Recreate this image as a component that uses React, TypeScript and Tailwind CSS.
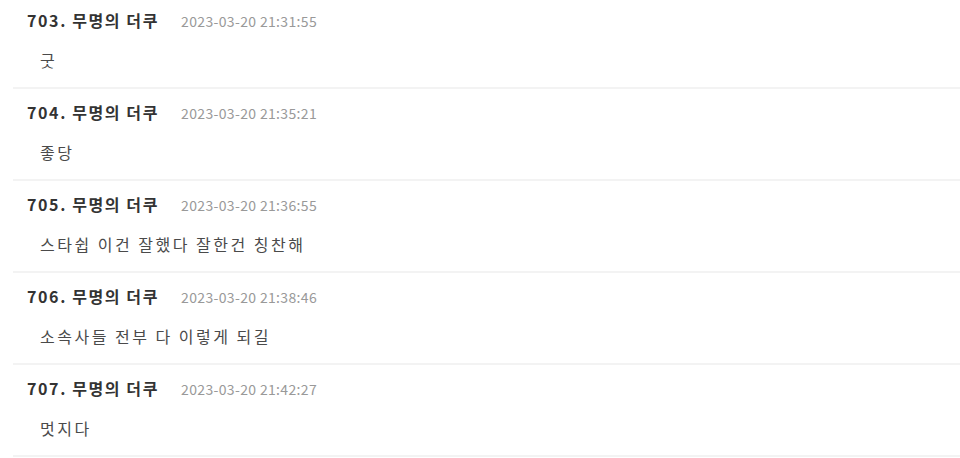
const comments = [
  { no: 703, name: "무명의 더쿠", date: "2023-03-20 21:31:55", body: "굿" },
  { no: 704, name: "무명의 더쿠", date: "2023-03-20 21:35:21", body: "좋당" },
  { no: 705, name: "무명의 더쿠", date: "2023-03-20 21:36:55", body: "스타쉽 이건 잘했다 잘한건 칭찬해" },
  { no: 706, name: "무명의 더쿠", date: "2023-03-20 21:38:46", body: "소속사들 전부 다 이렇게 되길" },
  { no: 707, name: "무명의 더쿠", date: "2023-03-20 21:42:27", body: "멋지다" },
];

export default function App() {
  return (
    <div
      className="w-[960px] h-[458px] overflow-hidden bg-white"
      style={{ fontFamily: '"Noto Sans CJK KR", "Noto Sans", sans-serif' }}
    >
      {/* list is scrolled a few px past its top */}
      <ul className="ml-[13px] -mt-[3px]">
        {comments.map((c) => (
          <li key={c.no} className="h-[92px] border-b-2 border-[#f3f3f3] pl-[14px]">
            <div className="flex items-baseline pt-[10px] h-[27px] leading-[26px]">
              <span className="text-[16px] font-bold tracking-[1.6px] text-[#333]">
                {c.no}. {c.name}
              </span>
              <span className="ml-[22px] text-[14px] tracking-[0.35px] text-[#999]">{c.date}</span>
            </div>
            <p className="mt-[23px] pl-[13px] text-[16px] tracking-[2.5px] leading-[26px] text-[#4a4a4a]">
              {c.body}
            </p>
          </li>
        ))}
      </ul>
    </div>
  );
}
